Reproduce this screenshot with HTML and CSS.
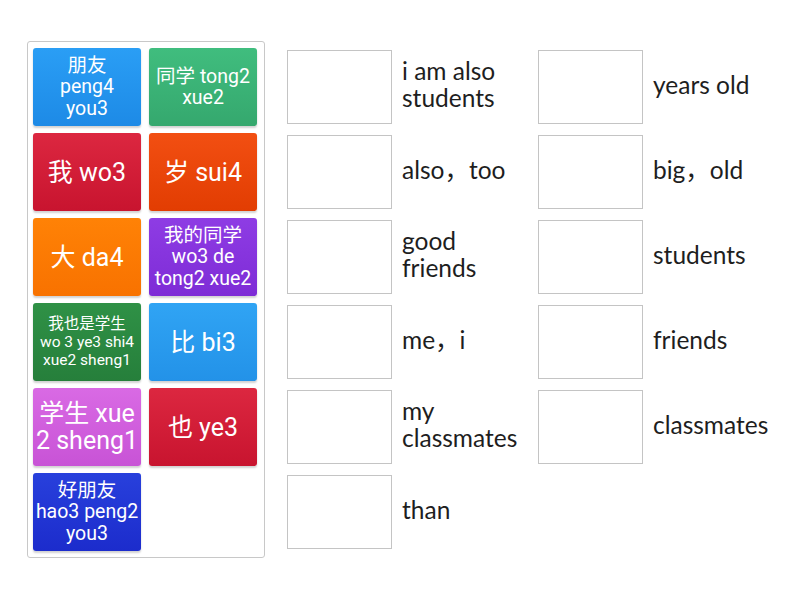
FILE: index.html
```html
<!DOCTYPE html>
<html lang="en">
<head>
<meta charset="utf-8">
<title>Match up</title>
<link rel="stylesheet" href="styles.css">
</head>
<body>
<div class="page">
  <div class="panel">
    <div class="tile c-blue s-md">朋友<br>peng4<br>you3</div>
    <div class="tile c-green s-md">同学 tong2<br>xue2</div>
    <div class="tile c-red s-lg">我 wo3</div>
    <div class="tile c-vermilion s-lg">岁 sui4</div>
    <div class="tile c-orange s-lg">大 da4</div>
    <div class="tile c-purple s-md">我的同学<br>wo3 de<br>tong2 xue2</div>
    <div class="tile c-dgreen s-sm">我也是学生<br>wo 3 ye3 shi4<br>xue2 sheng1</div>
    <div class="tile c-lblue s-lg">比 bi3</div>
    <div class="tile c-orchid s-lg">学生 xue<br>2 sheng1</div>
    <div class="tile c-red s-lg">也 ye3</div>
    <div class="tile c-royal s-md">好朋友<br>hao3 peng2<br>you3</div>
  </div>
  <div class="answers">
    <div class="col">
      <div class="item"><div class="box"></div><div class="label">i am also<br>students</div></div>
      <div class="item"><div class="box"></div><div class="label">also，too</div></div>
      <div class="item"><div class="box"></div><div class="label">good<br>friends</div></div>
      <div class="item"><div class="box"></div><div class="label">me，i</div></div>
      <div class="item"><div class="box"></div><div class="label">my<br>classmates</div></div>
      <div class="item"><div class="box"></div><div class="label">than</div></div>
    </div>
    <div class="col">
      <div class="item"><div class="box"></div><div class="label">years old</div></div>
      <div class="item"><div class="box"></div><div class="label">big，old</div></div>
      <div class="item"><div class="box"></div><div class="label">students</div></div>
      <div class="item"><div class="box"></div><div class="label">friends</div></div>
      <div class="item"><div class="box"></div><div class="label">classmates</div></div>
    </div>
  </div>
</div>
</body>
</html>
```

FILE: styles.css
```css
html, body {
  margin: 0;
  padding: 0;
  background: #ffffff;
}

.page {
  display: flex;
  align-items: flex-start;
  padding: 41px 0 0 27px;
}

.panel {
  box-sizing: border-box;
  width: 238px;
  height: 517px;
  border: 1px solid #c8c8c8;
  border-radius: 3px;
  padding: 6px 6px 0 5px;
  display: grid;
  grid-template-columns: 108px 108px;
  grid-auto-rows: 78px;
  column-gap: 8px;
  row-gap: 7px;
  align-content: start;
}

.tile {
  border-radius: 3px;
  color: #ffffff;
  display: flex;
  align-items: center;
  justify-content: center;
  text-align: center;
  font-family: Roboto, "Noto Sans CJK SC", sans-serif;
  font-weight: 400;
  box-shadow: 0 2px 2px rgba(0, 0, 0, 0.18);
  overflow: hidden;
  white-space: nowrap;
}

.s-lg { font-size: 25px; line-height: 27px; }
.s-md { font-size: 19.5px; line-height: 21.5px; }
.s-sm { font-size: 15.5px; line-height: 18px; }

.c-blue { background: linear-gradient(#2a9ef5, #1d8ae6); }
.c-green { background: linear-gradient(#40bd7e, #35a86e); }
.c-red { background: linear-gradient(#dc2740, #c8142f); }
.c-vermilion { background: linear-gradient(#f24f12, #e23d02); }
.c-orange { background: linear-gradient(#ff8206, #f87200); }
.c-purple { background: linear-gradient(#8e3ce4, #7e2cd6); }
.c-dgreen { background: linear-gradient(#2f9146, #267f3b); }
.c-lblue { background: linear-gradient(#30a4f4, #2392e8); }
.c-orchid { background: linear-gradient(#d96ae4, #c853d6); }
.c-royal { background: linear-gradient(#2840dc, #1c2ccc); }

.answers {
  display: flex;
  margin-left: 22px;
  margin-top: 9px;
}

.col {
  display: flex;
  flex-direction: column;
  gap: 11px;
  width: 251px;
}

.item {
  display: flex;
  align-items: center;
  height: 74px;
}

.box {
  box-sizing: border-box;
  width: 105px;
  height: 74px;
  border: 1px solid #c4c4c4;
  background: #ffffff;
  flex: none;
}

.label {
  margin-left: 10px;
  font-family: Lato, "Noto Sans CJK SC", sans-serif;
  font-size: 24.5px;
  line-height: 27px;
  color: #1e1e1e;
  margin-top: -6px;
}
```
